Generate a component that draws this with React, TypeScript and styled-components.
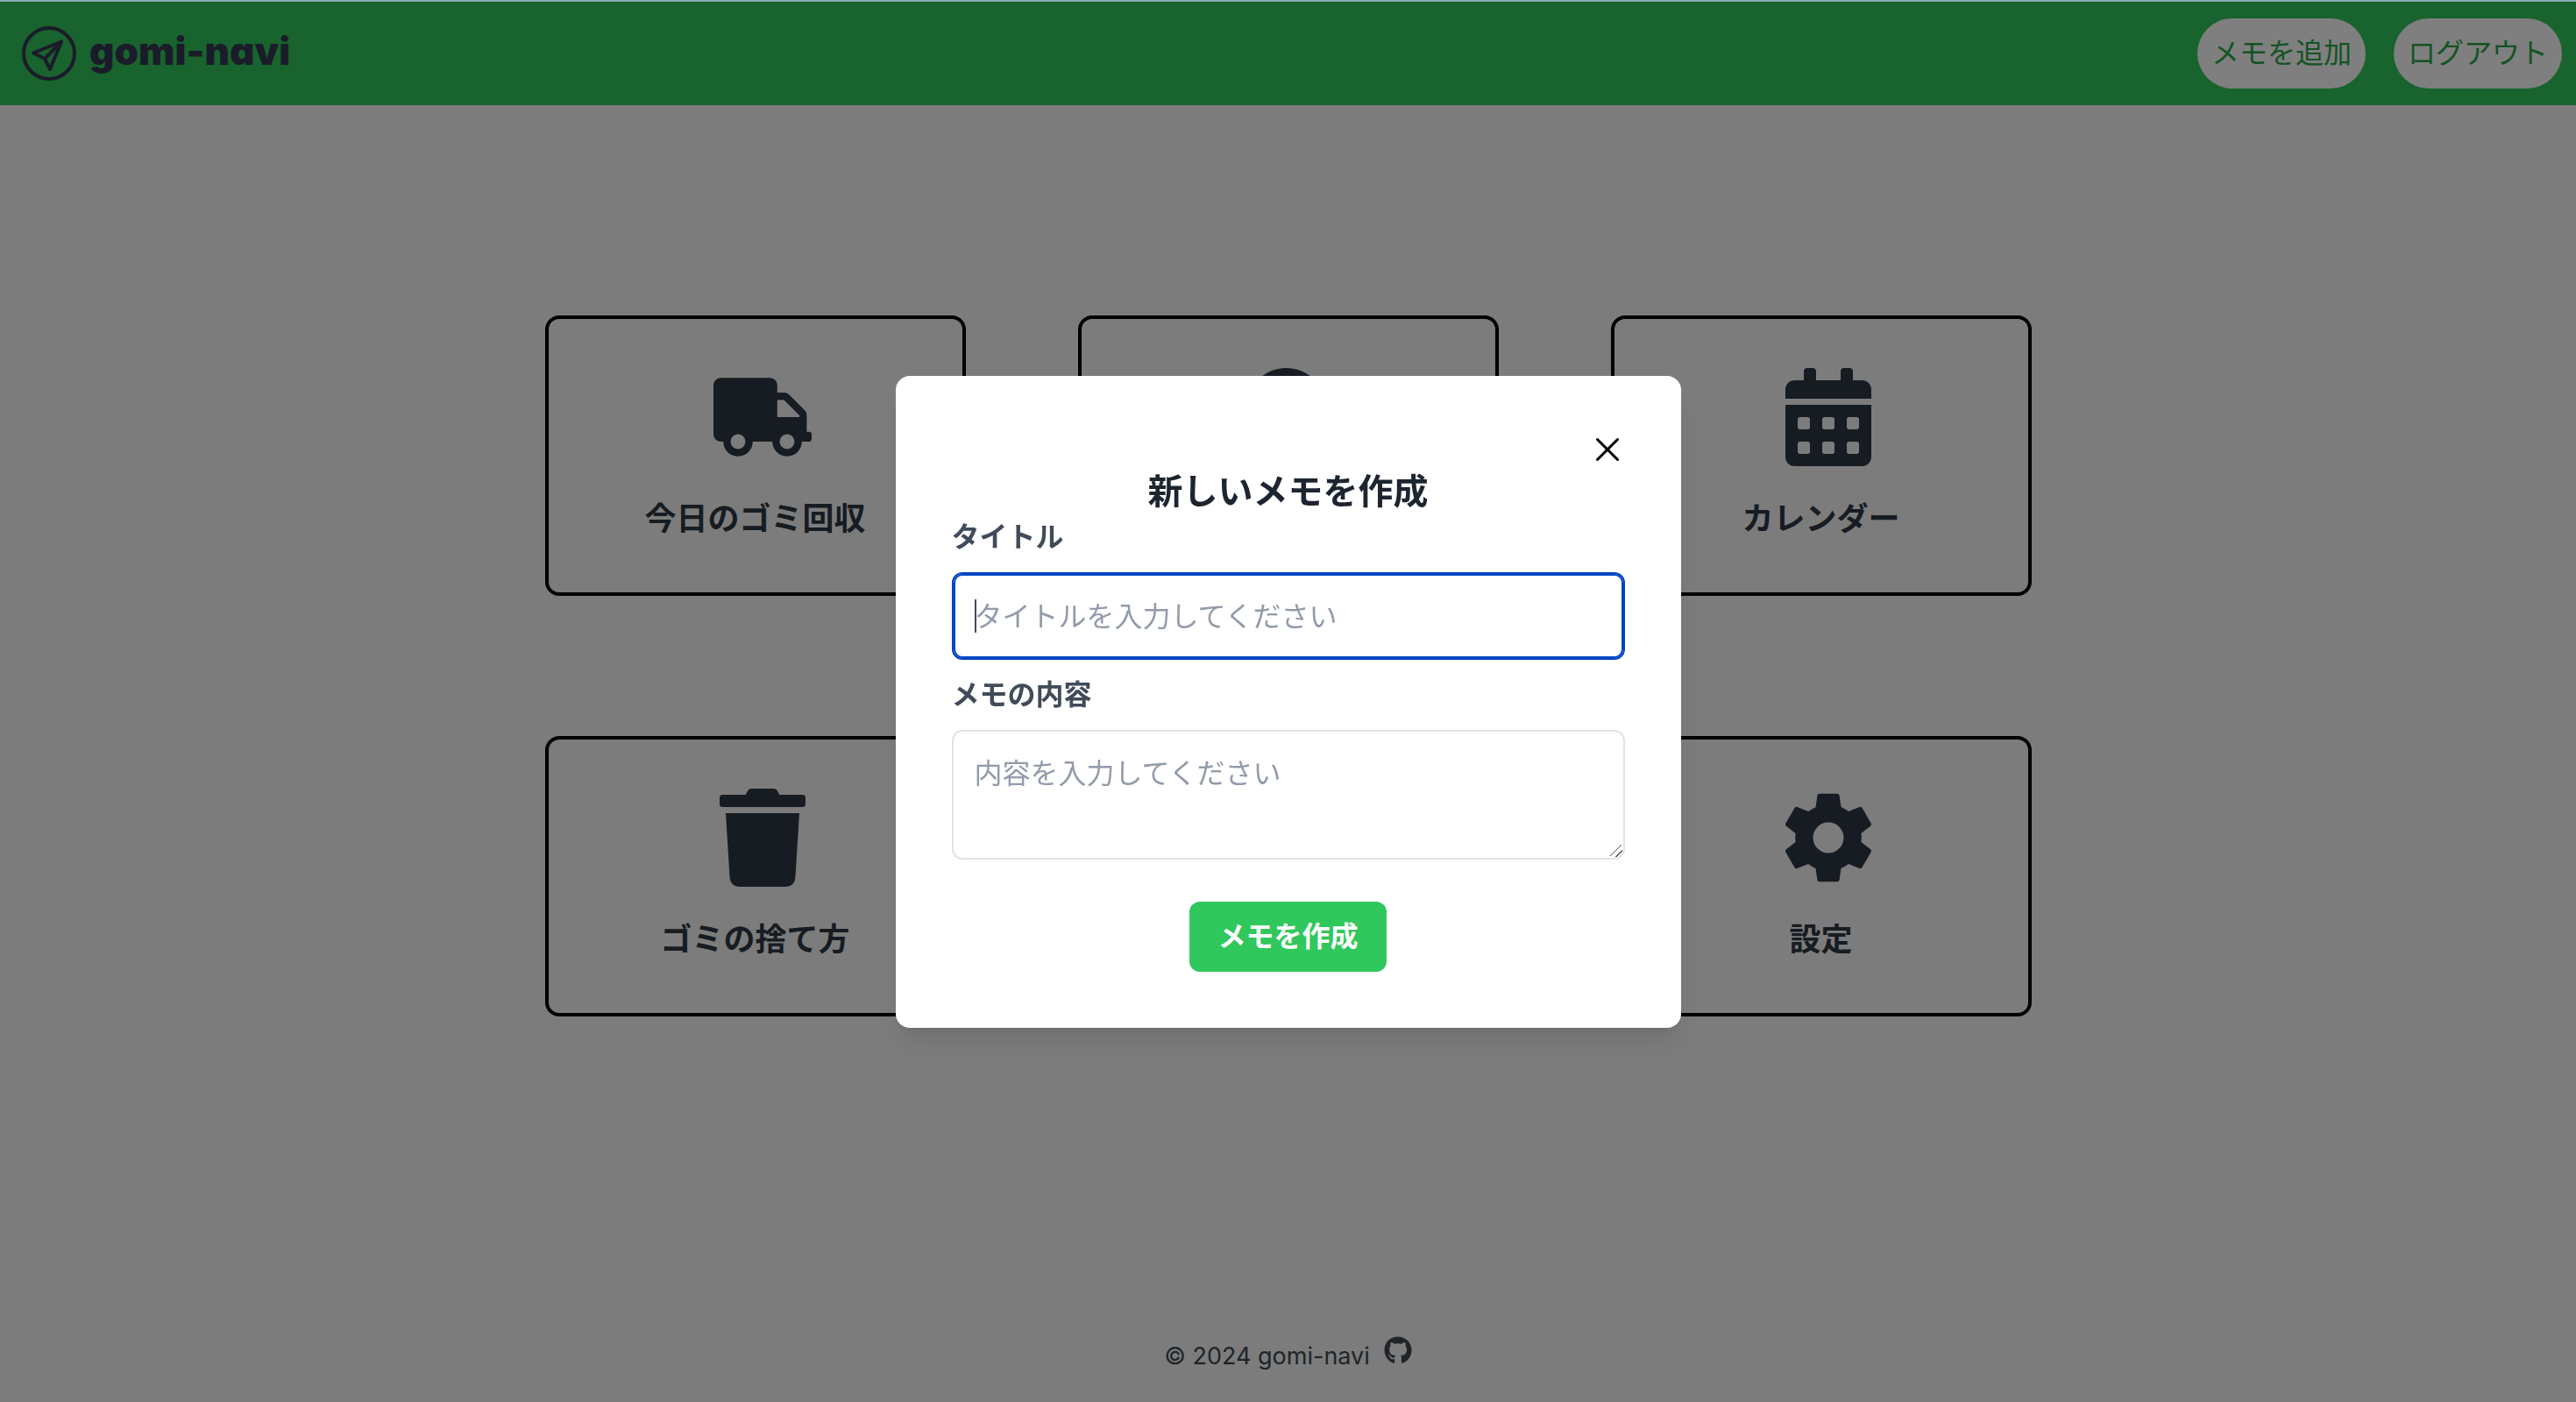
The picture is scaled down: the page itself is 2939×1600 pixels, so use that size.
import React, { useId, useState } from "react";
import styled, { createGlobalStyle, css } from "styled-components";
import { FaCalendarAlt, FaGithub, FaSearch, FaStickyNote, FaTrash, FaTruck } from "react-icons/fa";
import { IoSettingsSharp } from "react-icons/io5";
import type { IconType } from "react-icons";

const GlobalStyle = createGlobalStyle`
  *, *::before, *::after { box-sizing: border-box; }
  html { background: #f8f8f8; }
  body {
    margin: 0;
    font-family: Inter, "Noto Sans CJK JP", sans-serif;
    font-size: 32px;
    line-height: 48px;
    color: #2f3844;
  }
  h1, h2, p { margin: 0; }
  button, input, textarea { font: inherit; }
`;

const Page = styled.div`
  display: flex;
  flex-direction: column;
  min-height: 100vh;
  border-top: 2px solid #8aabb6;
`;

const Header = styled.header`
  display: flex;
  align-items: center;
  justify-content: space-between;
  height: 118px;
  padding: 0 16px 0 24px;
  background: #30c75c;
`;

const Brand = styled.a`
  display: flex;
  align-items: center;
  gap: 14px;
  color: #363852;
  text-decoration: none;
`;

const BrandMark = styled.svg`
  width: 64px;
  height: 64px;
`;

const BrandName = styled.span`
  padding-bottom: 6px;
  font-family: Inter, sans-serif;
  font-size: 44px;
  font-weight: 900;
  font-feature-settings: "cv11" 1;
`;

const HeaderActions = styled.nav`
  display: flex;
  gap: 32px;
`;

const PillButton = styled.button`
  height: 80px;
  padding: 0 16px;
  border: 0;
  border-radius: 40px;
  background: #fff;
  color: #28a848;
  line-height: 48px;
  cursor: pointer;
`;

const Main = styled.main`
  padding: 240px 32px 80px;
`;

const CardGrid = styled.div`
  display: grid;
  grid-template-columns: repeat(3, minmax(0, 480px));
  justify-content: center;
  gap: 160px 128px;
`;

const Card = styled.a`
  display: flex;
  flex-direction: column;
  align-items: center;
  justify-content: center;
  gap: 32px;
  height: 320px;
  border: 4px solid #000;
  border-radius: 16px;
  color: #2f3844;
  text-decoration: none;

  svg {
    width: 112px;
    height: 112px;
    margin-left: 16px;
  }
`;

const CardTitle = styled.span<{ $covered: boolean }>`
  font-size: 36px;
  font-weight: 700;
  line-height: 56px;
  visibility: ${({ $covered }) => ($covered ? "hidden" : "visible")};
`;

const Footer = styled.footer`
  display: flex;
  align-items: baseline;
  justify-content: center;
  gap: 16px;
  margin-top: auto;
  padding-bottom: 32px;
  font-size: 27px;
  line-height: 40px;
  color: #3e4853;
`;

const FooterLink = styled.a`
  color: inherit;

  svg {
    width: 32px;
    height: 32px;
  }
`;

const Overlay = styled.div`
  position: fixed;
  inset: 2px 0 0;
  display: flex;
  align-items: center;
  justify-content: center;
  background: rgba(0, 0, 0, 0.5);
`;

const Dialog = styled.section`
  display: flex;
  flex-direction: column;
  width: 896px;
  max-width: 100%;
  padding: 64px;
  border-radius: 16px;
  background: #fff;
  box-shadow: 0 20px 30px -6px rgba(0, 0, 0, 0.1), 0 8px 12px -4px rgba(0, 0, 0, 0.05);
`;

const CloseButton = styled.button`
  align-self: flex-end;
  width: 40px;
  height: 40px;
  padding: 0;
  border: 0;
  background: none;
  color: #000;
  cursor: pointer;

  svg {
    display: block;
    width: 40px;
    height: 40px;
  }
`;

const DialogTitle = styled.h2`
  font-size: 40px;
  font-weight: 700;
  line-height: 56px;
  text-align: center;
  color: #1d2530;
`;

const Form = styled.form`
  display: flex;
  flex-direction: column;
  gap: 16px;
`;

const Label = styled.label`
  font-weight: 700;
  color: #414b5a;
`;

const field = css`
  display: block;
  width: 100%;
  margin: 0;
  padding: 24px;
  border: 2px solid #e0e3e9;
  border-radius: 12px;
  outline: none;
  background: #fff;
  color: #414b5a;
  line-height: 48px;

  &::placeholder {
    color: #929baa;
    opacity: 1;
  }

  &:focus {
    border-color: #0044c4;
    box-shadow: inset 0 0 0 2px #0044c4;
  }
`;

const InputWrap = styled.div`
  position: relative;
`;

const TextInput = styled.input`
  ${field}
  height: 100px;
  caret-color: transparent;
`;

const Caret = styled.span`
  position: absolute;
  top: 31px;
  left: 26px;
  width: 2px;
  height: 38px;
  background: #414b5a;
`;

const TextArea = styled.textarea`
  ${field}
  height: 148px;
  resize: vertical;

  &::-webkit-resizer {
    background: linear-gradient(
        135deg,
        transparent 44%,
        #555 44%,
        #555 49%,
        transparent 49%,
        transparent 71%,
        #555 71%,
        #555 76%,
        transparent 76%
      )
      0 0 / 14px 14px no-repeat;
  }
`;

const SubmitButton = styled.button`
  align-self: center;
  height: 80px;
  margin-top: 32px;
  padding: 0 32px;
  border: 0;
  border-radius: 12px;
  background: #30c75c;
  color: #fff;
  font-weight: 700;
  line-height: 48px;
  cursor: pointer;
`;

const cards: { title: string; icon: IconType; behindDialog?: boolean }[] = [
  { title: "今日のゴミ回収", icon: FaTruck },
  { title: "ゴミを検索", icon: FaSearch, behindDialog: true },
  { title: "カレンダー", icon: FaCalendarAlt },
  { title: "ゴミの捨て方", icon: FaTrash },
  { title: "メモ", icon: FaStickyNote, behindDialog: true },
  { title: "設定", icon: IoSettingsSharp },
];

function PaperPlaneMark() {
  return (
    <BrandMark viewBox="0 0 64 64" fill="none" stroke="currentColor" strokeLinejoin="round" strokeLinecap="round" aria-hidden="true">
      <circle cx="32" cy="32" r="29" strokeWidth="4" />
      <path d="M46 18.500L14 31.500L27 38L33 50Z" strokeWidth="4" />
      <path d="M46 18.500L27 38" strokeWidth="4" />
    </BrandMark>
  );
}

function MemoDialog({ onClose }: { onClose: () => void }) {
  const id = useId();
  const [title, setTitle] = useState("");
  const [focused, setFocused] = useState(false);

  return (
    <Overlay>
      <Dialog role="dialog" aria-modal="true" aria-labelledby={`${id}-heading`}>
        <CloseButton type="button" aria-label="閉じる" onClick={onClose}>
          <svg viewBox="0 0 40 40" stroke="currentColor" strokeWidth="3" strokeLinecap="round" aria-hidden="true">
            <path d="M8.500 8.500L31.500 31.500M31.500 8.500L8.500 31.500" />
          </svg>
        </CloseButton>
        <DialogTitle id={`${id}-heading`}>新しいメモを作成</DialogTitle>
        <Form onSubmit={(event) => event.preventDefault()}>
          <Label htmlFor={`${id}-title`}>タイトル</Label>
          <InputWrap>
            <TextInput
              id={`${id}-title`}
              type="text"
              placeholder="タイトルを入力してください"
              value={title}
              onChange={(event) => setTitle(event.target.value)}
              onFocus={() => setFocused(true)}
              onBlur={() => setFocused(false)}
              autoFocus
            />
            {focused && title === "" && <Caret />}
          </InputWrap>
          <Label htmlFor={`${id}-body`}>メモの内容</Label>
          <TextArea id={`${id}-body`} rows={2} placeholder="内容を入力してください" />
          <SubmitButton type="submit">メモを作成</SubmitButton>
        </Form>
      </Dialog>
    </Overlay>
  );
}

export default function App() {
  const [open, setOpen] = useState(true);

  return (
    <>
      <GlobalStyle />
      <Page>
        <Header>
          <Brand href="#">
            <PaperPlaneMark />
            <BrandName>gomi-navi</BrandName>
          </Brand>
          <HeaderActions>
            <PillButton type="button" onClick={() => setOpen(true)}>
              メモを追加
            </PillButton>
            <PillButton type="button">ログアウト</PillButton>
          </HeaderActions>
        </Header>
        <Main>
          <CardGrid>
            {cards.map(({ title, icon: Icon, behindDialog }) => (
              <Card key={title} href="#">
                <Icon aria-hidden="true" />
                <CardTitle $covered={open && !!behindDialog}>{title}</CardTitle>
              </Card>
            ))}
          </CardGrid>
        </Main>
        <Footer>
          <p>© 2024 gomi-navi</p>
          <FooterLink href="#" aria-label="GitHub">
            <FaGithub aria-hidden="true" />
          </FooterLink>
        </Footer>
      </Page>
      {open && <MemoDialog onClose={() => setOpen(false)} />}
    </>
  );
}
